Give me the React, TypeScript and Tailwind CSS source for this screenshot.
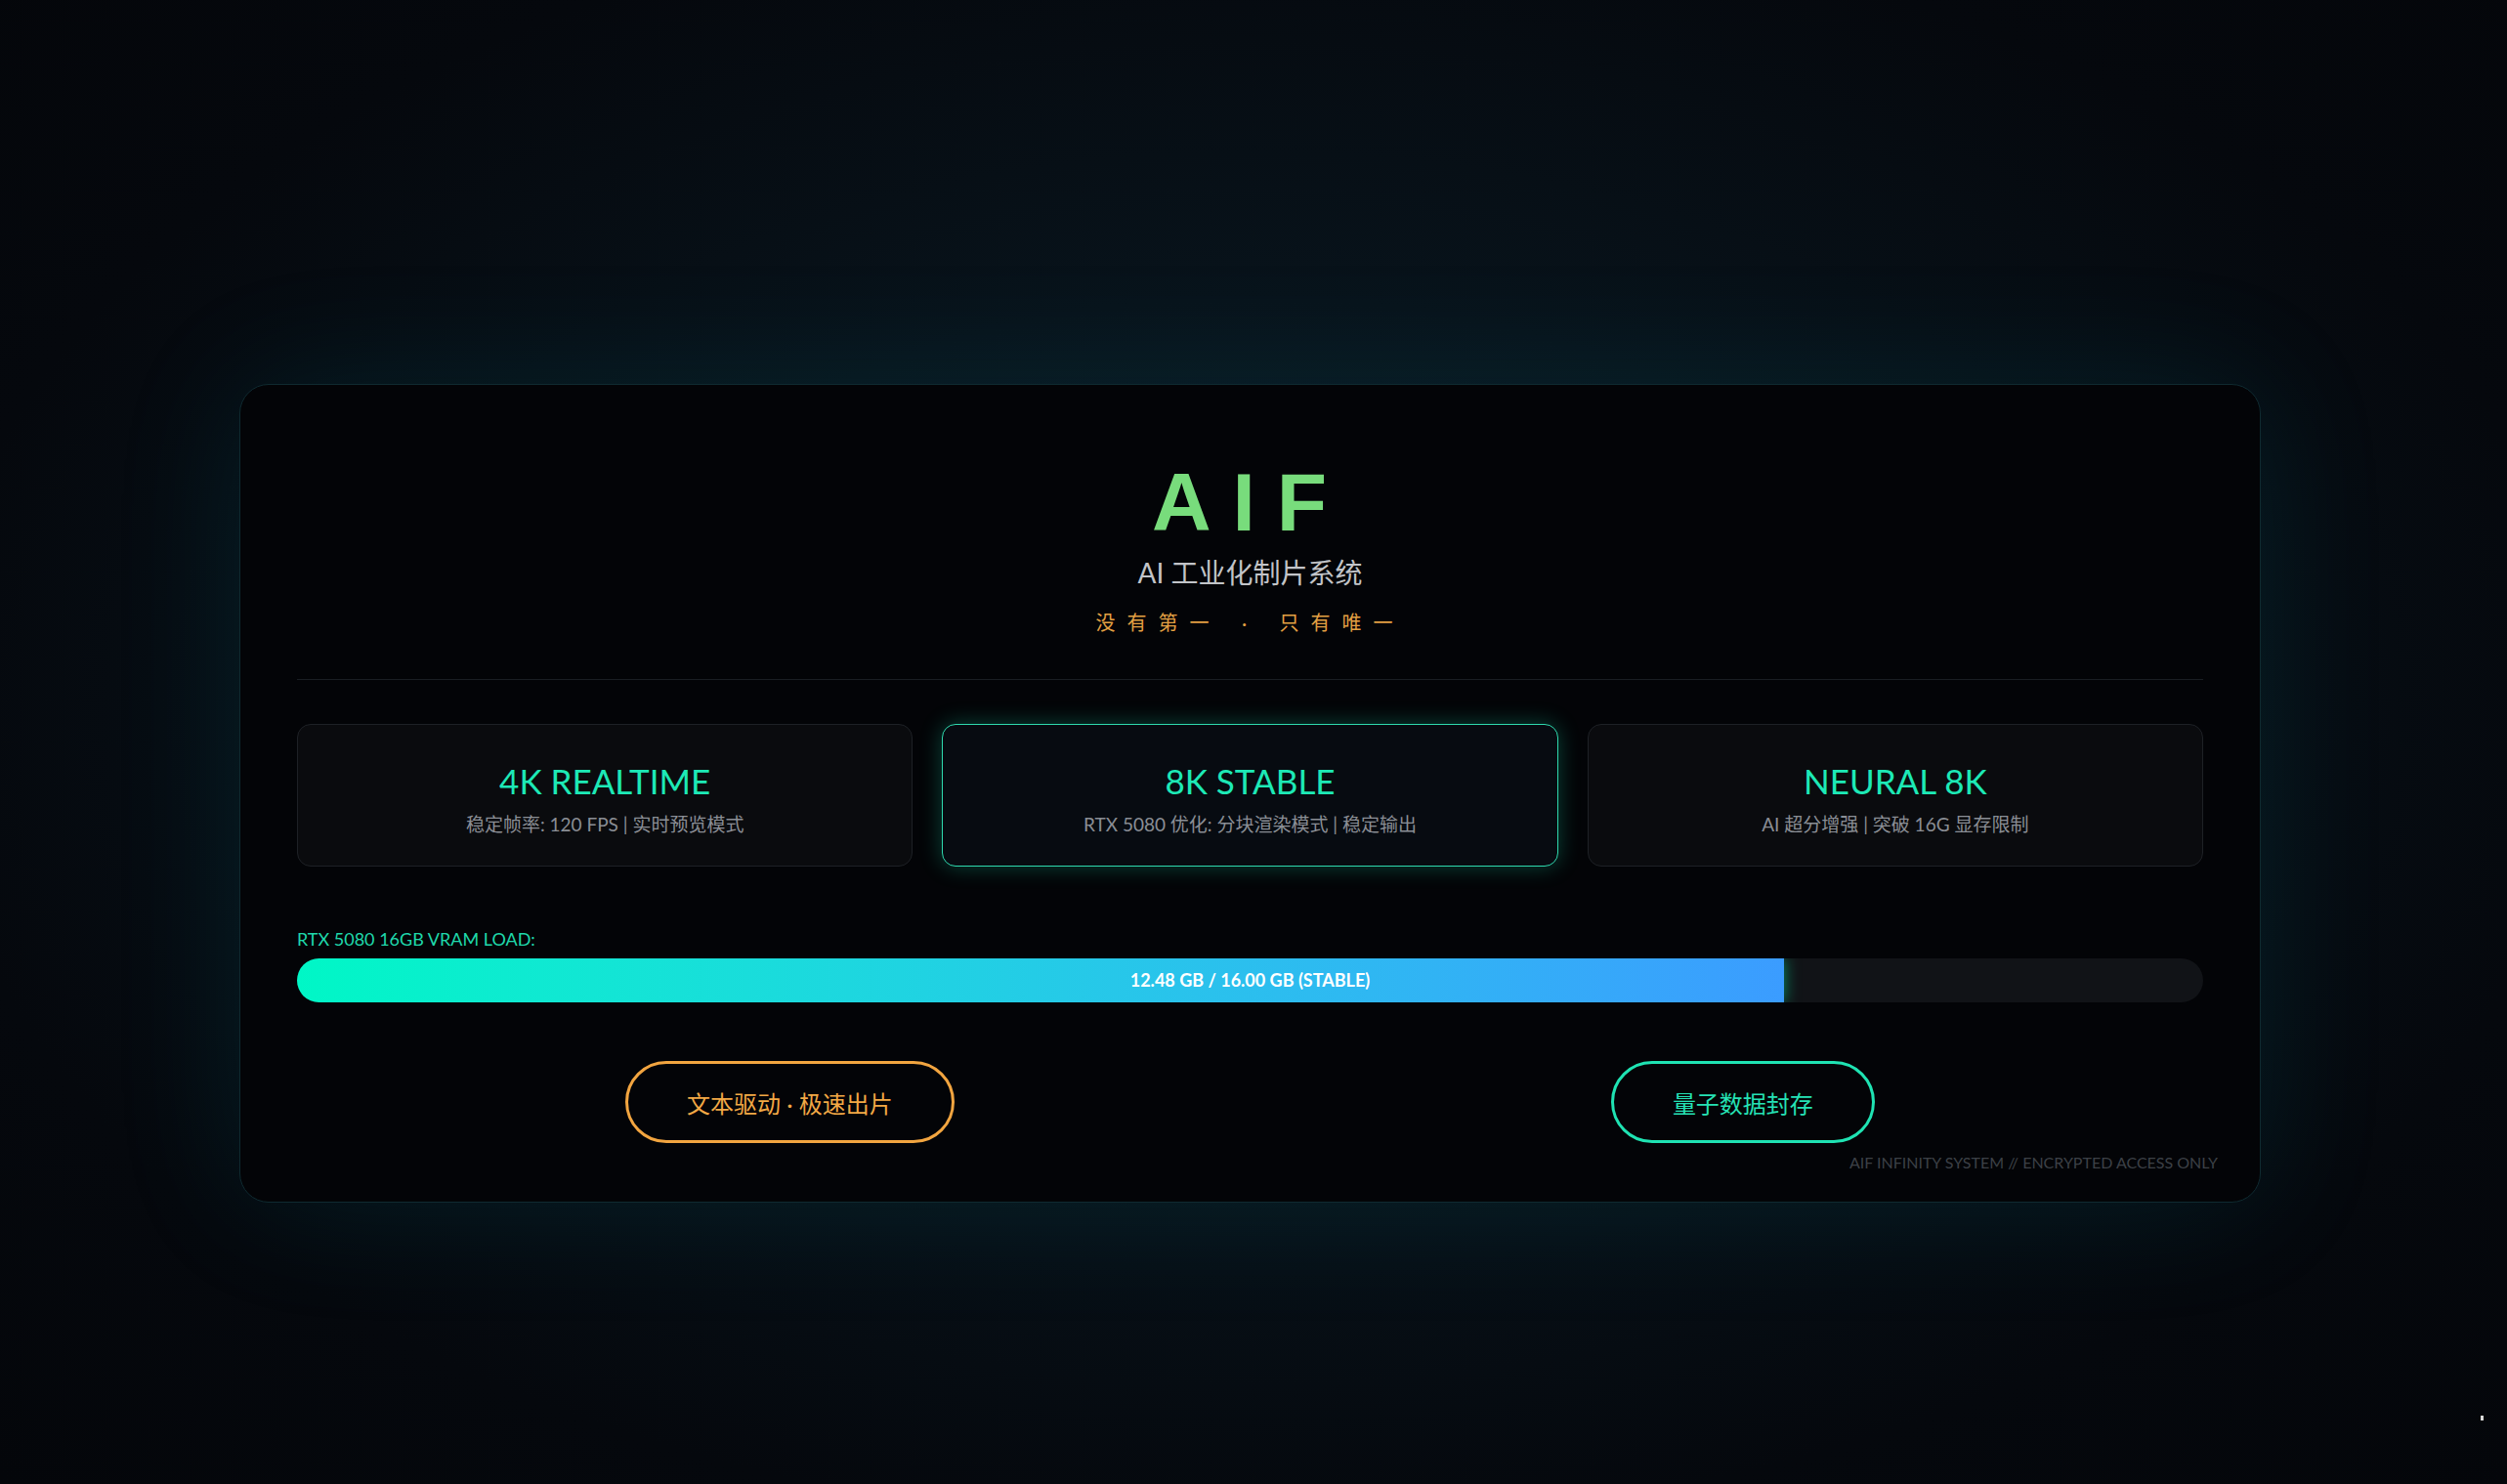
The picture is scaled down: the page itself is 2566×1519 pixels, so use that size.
const modes = [
  { title: "4K REALTIME", desc: "稳定帧率: 120 FPS | 实时预览模式", active: false },
  { title: "8K STABLE", desc: "RTX 5080 优化: 分块渲染模式 | 稳定输出", active: true },
  { title: "NEURAL 8K", desc: "AI 超分增强 | 突破 16G 显存限制", active: false },
]

const used = 12.48
const total = 16

export default function App() {
  return (
    <div
      className="relative min-h-screen w-full bg-[radial-gradient(ellipse_at_50%_48%,#0c1c26_0%,#08131b_38%,#05080d_75%,#04060a_100%)] pt-[393px] pr-[7px]"
      style={{ fontFamily: '"Lato", "Noto Sans CJK SC", sans-serif' }}
    >
      <div className="relative mx-auto w-[2069px] rounded-[30px] border border-[#0f2a30] bg-[#030407] px-[58px] pt-[78px] pb-[60px] shadow-[0_0_140px_rgba(20,170,190,0.11)]">
        <div className="text-center">
          <h1
            className="text-[84px] font-bold leading-none tracking-[0.26em] text-[#78dc7c]"
            style={{ fontFamily: '"Liberation Sans", Arial, sans-serif' }}
          >
            AIF
          </h1>
          <p className="mt-[13px] text-[28px] leading-[34px] text-[#c2c4c8]">AI 工业化制片系统</p>
          <p
            className="mt-[20px] text-[20px] leading-[28px] tracking-[0.6em] text-[#e3a043]"
            style={{ fontFamily: '"Noto Sans CJK SC", sans-serif' }}
          >
            没有第一 <span className="mx-[5px]" style={{ fontFamily: '"Lato", sans-serif' }}>·</span> 只有唯一
          </p>
        </div>

        <div className="mt-[44px] h-px bg-[#1a1e23]" />

        <div className="mt-[45px] grid grid-cols-3 gap-[30px]">
          {modes.map((m) => (
            <div
              key={m.title}
              className={
                m.active
                  ? "rounded-[14px] border border-[#2fd9ae] bg-[#070b11] pt-[35px] pb-[29px] text-center shadow-[0_0_22px_rgba(29,233,182,0.28)]"
                  : "rounded-[14px] border border-[#1e2126] bg-[#0a0b0e] pt-[35px] pb-[29px] text-center"
              }
            >
              <div className="text-[35px] leading-[44px] text-[#1de9b6]">{m.title}</div>
              <div className="mt-[10px] text-[19px] leading-[26px] text-[#8a8e95]">{m.desc}</div>
            </div>
          ))}
        </div>

        <div className="mt-[62px] text-[18px] leading-[24px] text-[#1fd8ab]">RTX 5080 16GB VRAM LOAD:</div>

        <div className="relative mt-[8px] h-[45px] overflow-hidden rounded-full bg-[#111317]">
          <div
            className="h-full bg-gradient-to-r from-[#00f7c6] to-[#3b9cff] shadow-[0_0_16px_rgba(0,255,170,0.55)]"
            style={{ width: `${(used / total) * 100}%` }}
          />
          <div className="absolute inset-0 flex items-center justify-center text-[18px] font-bold text-white">
            12.48 GB / 16.00 GB (STABLE)
          </div>
        </div>

        <div className="mt-[60px] flex justify-around">
          <button className="flex h-[84px] items-center rounded-full border-[3px] border-[#f2a540] px-[60px] pt-[3px] text-[24px] text-[#f2a845]">
            文本驱动 · 极速出片
          </button>
          <button className="flex h-[84px] items-center rounded-full border-[3px] border-[#1fe3b3] px-[60px] pt-[3px] text-[24px] text-[#25e2b5]">
            量子数据封存
          </button>
        </div>

        <div className="absolute right-[43px] bottom-[30px] text-[16px] leading-[20px] text-[#3c4046]">
          AIF INFINITY SYSTEM // ENCRYPTED ACCESS ONLY
        </div>
      </div>

      <span className="absolute left-[2539px] top-[1449px] h-[5px] w-[3px] bg-[#d8d8d8]" />
    </div>
  )
}
